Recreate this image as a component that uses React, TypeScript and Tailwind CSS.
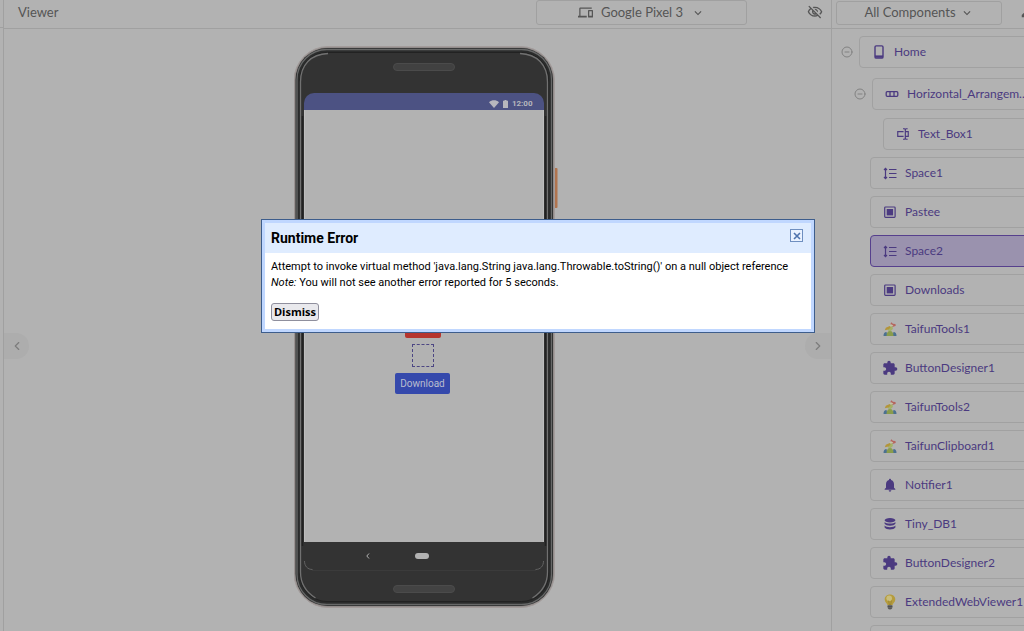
import React, { useState } from 'react';
import { ChevronLeft, ChevronRight, CircleMinus } from 'lucide-react';
import {
  MdDevices,
  MdEdit,
  MdExtension,
  MdKeyboardArrowDown,
  MdNotifications,
  MdOutlineVisibilityOff
} from 'react-icons/md';

type IconName =
  | 'screen'
  | 'horizontal'
  | 'textbox'
  | 'space'
  | 'button'
  | 'taifun'
  | 'extension'
  | 'notifier'
  | 'database'
  | 'bulb';

interface TreeNode {
  name: string;
  icon: IconName;
  children?: TreeNode[];
}

const horizontalArrangement: TreeNode = {
  name: 'Horizontal_Arrangem..',
  icon: 'horizontal',
  children: [{ name: 'Text_Box1', icon: 'textbox' }]
};

const components: TreeNode[] = [
  { name: 'Space1', icon: 'space' },
  { name: 'Pastee', icon: 'button' },
  { name: 'Space2', icon: 'space' },
  { name: 'Downloads', icon: 'button' },
  { name: 'TaifunTools1', icon: 'taifun' },
  { name: 'ButtonDesigner1', icon: 'extension' },
  { name: 'TaifunTools2', icon: 'taifun' },
  { name: 'TaifunClipboard1', icon: 'taifun' },
  { name: 'Notifier1', icon: 'notifier' },
  { name: 'Tiny_DB1', icon: 'database' },
  { name: 'ButtonDesigner2', icon: 'extension' },
  { name: 'ExtendedWebViewer1', icon: 'bulb' }
];

function ComponentIcon({ name }: { name: IconName }) {
  switch (name) {
    case 'screen':
      return (
        <svg viewBox="0 0 14 14" className="size-3.5" fill="none" stroke="currentColor">
          <rect x="3" y="0.9" width="8" height="12.2" rx="1.2" strokeWidth="1.4" />
          <path d="M3 11.6h8" strokeWidth="2.4" />
        </svg>
      );
    case 'horizontal':
      return (
        <svg viewBox="0 0 14 14" className="size-3.5" fill="none" stroke="currentColor" strokeWidth="1.3">
          <rect x="1.2" y="4.7" width="11.6" height="4.6" rx="1" />
          <path d="M5 4.7v4.6M9 4.7v4.6" />
        </svg>
      );
    case 'textbox':
      return (
        <svg viewBox="0 0 24 24" className="size-3.5" fill="currentColor">
          <path d="M17,7H22V17H17V19A1,1 0 0,0 18,20H20V22H17.5C16.95,22 16,21.55 16,21C16,21.55 15.05,22 14.5,22H12V20H14A1,1 0 0,0 15,19V5A1,1 0 0,0 14,4H12V2H14.5C15.05,2 16,2.45 16,3C16,2.45 16.95,2 17.5,2H20V4H18A1,1 0 0,0 17,5V7M2,7H13V9H4V15H13V17H2V7M20,15V9H17V15H20Z" />
        </svg>
      );
    case 'space':
      return (
        <svg viewBox="0 0 14 14" className="size-3.5" fill="none" stroke="currentColor" strokeWidth="1.2">
          <path d="M2.500 3v9M1 4l1.500-1.600L4 4M1 11l1.500 1.600L4 11" />
          <path d="M6 3.500h7.500M6 7.500h7.500M6 11.500h7.500" />
        </svg>
      );
    case 'button':
      return (
        <svg viewBox="0 0 14 14" className="size-3.5">
          <rect x="1.700" y="2" width="10.400" height="10.400" rx="0.8" fill="none" stroke="currentColor" strokeWidth="1.200" />
          <rect x="3.700" y="4" width="6.400" height="6.400" fill="currentColor" />
        </svg>
      );
    case 'taifun':
      return (
        <svg viewBox="0 0 14 14" className="size-3.5">
          <path d="M0.500 14c0-2.600 1-4 3-4l1 4zM13.500 14c0-2.600-1-4-3-4l-1 4z" fill="#4b7091" />
          <path d="M3.500 14c0-3 1.200-5 3.500-5s3.500 2 3.500 5z" fill="#8a9c4c" />
          <path d="M4.800 5.500l4.700-1.800.4 3.300L7.400 9.200 5 8.400z" fill="#a4b268" />
          <path d="M1.800 8.200l1-2.400 4-1.800.8 1.800-2.200 1.600z" fill="#b3953a" />
          <path d="M7.600 1.200l1-1 1.200 1.600 2.600.2.400 1.800-2.400 1L8 4z" fill="#b5655e" />
          <path d="M6.200 3.800l2-1.600 2.200 1.400-1.600 1z" fill="#c4c2a8" />
        </svg>
      );
    case 'extension':
      return <MdExtension className="size-4 shrink-0" />;
    case 'notifier':
      return <MdNotifications className="size-4 shrink-0" />;
    case 'database':
      return (
        <svg viewBox="0 0 14 14" className="size-3.5" fill="currentColor">
          <ellipse cx="7" cy="3.300" rx="5.400" ry="2.200" />
          <path d="M1.600 5c1.500 2.100 9.300 2.100 10.800 0v1.800c-1.500 2.600-9.300 2.600-10.800 0z" />
          <path d="M1.600 8.600c1.500 2.100 9.300 2.100 10.800 0v2c-1.500 2.600-9.300 2.600-10.800 0z" />
        </svg>
      );
    case 'bulb':
      return (
        <svg viewBox="0 0 14 16" className="h-4 w-3.5">
          <path d="M7 .5c3.200 0 5.300 2.200 5.300 5 0 2.700-2.300 3.500-2.800 5.500h-5C4 9 1.700 8.200 1.700 5.500c0-2.800 2.100-5 5.300-5z" fill="#b59c3d" />
          <circle cx="6.200" cy="4.300" r="2.800" fill="#c9bd7c" />
          <path d="M5.600 6.500L6.400 11h1.200l.8-4.500" fill="none" stroke="#8d7830" strokeWidth=".6" />
          <path d="M4.600 11h4.800v3L8 15.500H6L4.600 14z" fill="#6b6b6b" />
          <path d="M4.600 12.500h4.800M5.200 14.200h3.600" stroke="#464646" strokeWidth=".7" />
        </svg>
      );
  }
}

interface RowProps {
  node: TreeNode;
  selected: string;
  onSelect: (name: string) => void;
}

function ComponentRow({ node, selected, onSelect }: RowProps) {
  const active = selected === node.name;
  return (
    <button
      type="button"
      onClick={() => onSelect(node.name)}
      className={`flex h-8 flex-1 items-center gap-2 rounded-[4px] border pl-3 whitespace-nowrap ${
        active ? 'border-[#56408d] bg-[#9a92ae]' : 'border-[#a1a1a1]'
      }`}
    >
      <span className="flex w-3.5 shrink-0 justify-center">
        <ComponentIcon name={node.icon} />
      </span>
      <span>{node.name}</span>
    </button>
  );
}

function Collapse({ label }: { label: string }) {
  return (
    <button type="button" aria-label={label} className="shrink-0 text-[#828282]">
      <CircleMinus size={12} strokeWidth={2} />
    </button>
  );
}

function PhoneFrame() {
  return (
    <svg viewBox="0 0 264 562" className="absolute inset-0 h-full w-full" aria-hidden="true">
      <rect x="260" y="122" width="3.500" height="40" rx="1" fill="#b0744f" />
      <rect x="0" y="0.500" width="260.500" height="561" rx="34" fill="#928c8b" stroke="#a39c9b" />
      <rect x="1.500" y="2" width="257.500" height="558" rx="32" fill="#2b2c2c" />
      <rect x="3" y="3.500" width="254.500" height="555" rx="30" fill="none" stroke="#676868" strokeWidth="1.300" />
      <rect x="6" y="6.500" width="248.500" height="549" rx="27" fill="#333" stroke="#222" />
      <path d="M6.500 500V60M6.500 500V36C6.500 19 17 8 34 7.500M253.500 500V36C253.500 19 243 8 226 7.500M6.500 500V526c0 14 7 21 15 26M253.500 500V526c0 14-7 21-15 26" fill="none" stroke="#717171" strokeWidth="1.300" />
      <path d="M8.500 500V70M251.500 500V70" stroke="#222" strokeWidth="1.500" />
      <rect x="99.500" y="17.500" width="61" height="7" rx="3.500" fill="#414141" stroke="#4b4b4b" />
      <rect x="99.500" y="539.500" width="61" height="7" rx="3.500" fill="#434343" stroke="#4b4b4b" />
      <path d="M18 524.500h224" stroke="#3b3b3b" />
    </svg>
  );
}

function Phone() {
  return (
    <div className="relative h-[562px] w-[264px] pt-[47px] pl-[10px]">
      <PhoneFrame />
      <div className="relative flex w-[240px] flex-col">
        <div className="flex h-[17px] items-center justify-end gap-1 rounded-t-[10px] bg-[#4c5283] pt-1 pr-[11px] font-[Roboto] text-[8px] font-bold text-[#b7b7bd]">
          <svg viewBox="0 0 10 8" className="h-2 w-2.5" fill="currentColor">
            <path d="M0 2.200C3-.4 7-.4 10 2.200L5 8z" />
          </svg>
          <svg viewBox="0 0 5 8" className="h-2 w-[5px]" fill="currentColor">
            <path d="M1.500 0h2v.8H5V8H0V.8h1.500z" />
          </svg>
          <span>12:00</span>
        </div>
        <div className="flex h-[432px] flex-col items-center gap-1.5 border-x border-[#bdbdbd] bg-[#b2b2b2] pt-[207px] pr-0.5">
          <button type="button" aria-label="Pastee" className="h-[21px] w-9 rounded-[2px] bg-[#b5352e]" />
          <div className="h-[23px] w-[22px] border border-dashed border-[#4c4683]" />
          <button
            type="button"
            className="h-[21px] w-[55px] rounded-[2px] bg-[#3549ac] font-[Roboto] text-[10px] text-[#b9bdcf]"
          >
            Download
          </button>
        </div>
        <div className="relative flex h-7 items-center bg-[#333] pl-[62px] text-[#b2b2b2]">
          <svg viewBox="0 0 4 6" className="h-1.5 w-1" fill="none" stroke="currentColor">
            <path d="M3 .5L.8 3 3 5.500" />
          </svg>
          <div className="ml-[45px] h-1.5 w-3.5 rounded-full bg-[#b2b2b2]" />
          <svg viewBox="0 0 240 28" className="absolute inset-0 h-full w-full" fill="none" stroke="#626262">
            <path d="M.5 19c0 5 3 8.500 8 8.500M239.500 19c0 5-3 8.500-8 8.500" />
          </svg>
        </div>
      </div>
    </div>
  );
}

function ErrorDialog({ onClose }: { onClose: () => void }) {
  return (
    <div
      role="dialog"
      aria-labelledby="error-title"
      className="absolute top-[219px] left-[261px] w-[554px] border border-[#3d5d8c] bg-white font-[Roboto] text-black"
    >
      <div className="border-3 border-[#c0d7ff]">
        <div className="flex h-[30px] items-center justify-between bg-[#dfecff] px-1.5 pr-2">
          <h2 id="error-title" className="text-sm font-bold">Runtime Error</h2>
          <button
            type="button"
            aria-label="Close"
            onClick={onClose}
            className="mt-1.5 flex size-[13px] items-center justify-center self-start border border-[#6f8fc0] bg-[#eaf2ff]"
          >
            <svg viewBox="0 0 8 8" className="size-2" stroke="#4f73ad" strokeWidth="1.600">
              <path d="M1 1l6 6M7 1L1 7" />
            </svg>
          </button>
        </div>
        <div className="px-1.5 pt-1.5 pb-2 text-[11px] leading-4">
          <p className="whitespace-nowrap">
            Attempt to invoke virtual method 'java.lang.String java.lang.Throwable.toString()' on a null object reference
          </p>
          <p>
            <em>Note:</em> You will not see another error reported for 5 seconds.
          </p>
          <button
            type="button"
            onClick={onClose}
            className="mt-3 block h-[18px] w-12 rounded-[3px] border border-[#8f8f9d] bg-[#e9e9ed] font-['Open_Sans'] leading-4 font-bold"
          >
            Dismiss
          </button>
        </div>
      </div>
    </div>
  );
}

export default function App() {
  const [selected, setSelected] = useState('Space2');
  const [showError, setShowError] = useState(true);

  return (
    <div className="relative flex h-screen overflow-hidden bg-[#b2b2b2] font-[Lato,sans-serif] text-[13px] text-[#555]">
      <div className="w-1 shrink-0 border-r border-[#a0a0a0]">
        <div className="h-7 border-b border-[#a0a0a0]" />
      </div>

      {/* VIEWER */}
      <main className="relative flex min-w-0 flex-1 flex-col">
        <header className="flex h-[29px] shrink-0 items-start border-b border-[#a0a0a0] pr-2 pl-3.5">
          <h1 className="leading-6">Viewer</h1>
          <div className="ml-auto flex h-[25px] w-[211px] items-center justify-center gap-2 rounded-[3px] border border-[#a0a0a0]">
            <MdDevices size={15} />
            <select aria-label="Device" className="field-sizing-content appearance-none bg-transparent">
              <option>Google Pixel 3</option>
            </select>
            <MdKeyboardArrowDown size={14} />
          </div>
          <button type="button" aria-label="Hide components" className="ml-[60px] pt-1">
            <MdOutlineVisibilityOff size={16} />
          </button>
        </header>

        <div className="flex justify-center pt-[17px] pl-4">
          <Phone />
        </div>

        <button
          type="button"
          aria-label="Collapse palette"
          className="absolute top-[333px] left-0 flex h-[26px] w-[25px] items-center justify-center rounded-r-full bg-[#adadad] text-[#7c7c7c]"
        >
          <ChevronLeft size={14} />
        </button>
        <button
          type="button"
          aria-label="Collapse tree"
          className="absolute top-[333px] right-0 flex h-[26px] w-[26px] items-center justify-center rounded-l-full bg-[#adadad] text-[#7c7c7c]"
        >
          <ChevronRight size={14} />
        </button>
      </main>

      {/* COMPONENT TREE */}
      <aside className="w-[193px] shrink-0 overflow-hidden border-l border-[#a0a0a0]">
        <header className="flex h-[29px] w-[212px] items-start gap-[18px] border-b border-[#a0a0a0] pt-px pl-1">
          <div className="flex h-6 w-[166px] shrink-0 items-center justify-center gap-1 rounded-[3px] border border-[#a0a0a0]">
            <select aria-label="Component filter" className="field-sizing-content appearance-none bg-transparent">
              <option>All Components</option>
            </select>
            <MdKeyboardArrowDown size={14} />
          </div>
          <button type="button" aria-label="Rename" className="shrink-0 pt-1">
            <MdEdit size={14} />
          </button>
        </header>

        <ul className="w-[212px] pt-[7px] text-xs text-[#4b3a80]">
          <li>
            <div className="flex items-center gap-1.5 pl-[9px]">
              <Collapse label="Collapse Home" />
              <ComponentRow node={{ name: 'Home', icon: 'screen' }} selected={selected} onSelect={setSelected} />
            </div>
            <ul className="flex flex-col gap-[7px] pt-2.5">
              <li>
                <div className="flex items-center gap-1.5 pl-[22px]">
                  <Collapse label="Collapse Horizontal_Arrangement" />
                  <ComponentRow node={horizontalArrangement} selected={selected} onSelect={setSelected} />
                </div>
                <ul className="pt-2">
                  {horizontalArrangement.children?.map((child) => (
                    <li key={child.name} className="flex pl-[51px]">
                      <ComponentRow node={child} selected={selected} onSelect={setSelected} />
                    </li>
                  ))}
                </ul>
              </li>
              {components.map((component) => (
                <li key={component.name} className="flex pl-[38px]">
                  <ComponentRow node={component} selected={selected} onSelect={setSelected} />
                </li>
              ))}
              <li className="flex pl-[38px]">
                <div className="h-8 flex-1 rounded-[4px] border border-[#a1a1a1]" />
              </li>
            </ul>
          </li>
        </ul>
      </aside>

      {showError && <ErrorDialog onClose={() => setShowError(false)} />}
    </div>
  );
}
